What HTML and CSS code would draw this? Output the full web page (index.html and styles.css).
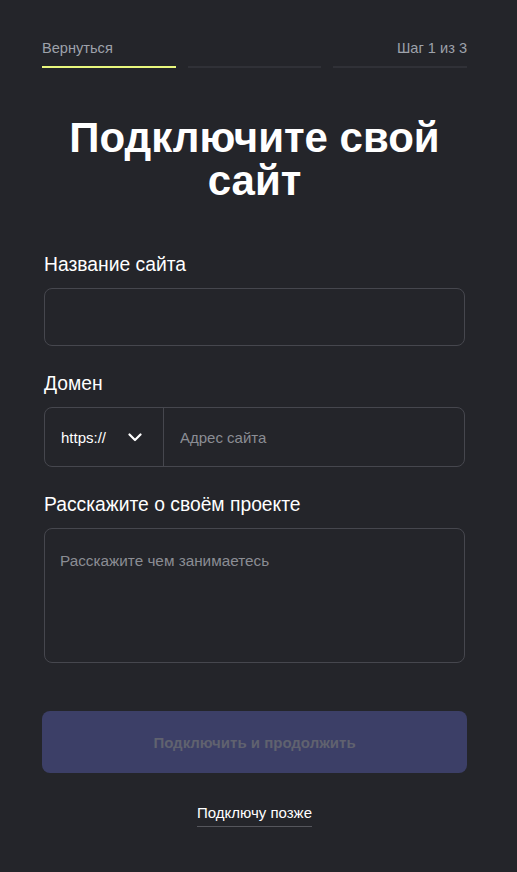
FILE: index.html
```html
<!DOCTYPE html>
<html lang="ru">
<head>
<meta charset="utf-8">
<title>Подключите свой сайт</title>
<link rel="stylesheet" href="styles.css">
</head>
<body>
<div class="page">
  <header class="topbar">
    <div class="topbar-row">
      <a class="back" href="#">Вернуться</a>
      <span class="step">Шаг 1 из 3</span>
    </div>
    <div class="progress">
      <span class="seg seg-active"></span>
      <span class="seg"></span>
      <span class="seg"></span>
    </div>
  </header>

  <h1 class="title">Подключите свой сайт</h1>

  <form class="form">
    <div class="field">
      <label class="label">Название сайта</label>
      <input class="input" type="text">
    </div>
    <div class="field">
      <label class="label">Домен</label>
      <div class="domain">
        <div class="proto">
          <span>https://</span>
          <svg class="chev" width="14" height="9" viewBox="0 0 14 9"><path d="M1.5 1.5 L7 7 L12.5 1.5" fill="none" stroke="#fff" stroke-width="2.2" stroke-linecap="round" stroke-linejoin="round"/></svg>
        </div>
        <input class="domain-input" type="text" placeholder="Адрес сайта">
      </div>
    </div>
    <div class="field">
      <label class="label">Расскажите о своём проекте</label>
      <textarea class="textarea" placeholder="Расскажите чем занимаетесь"></textarea>
    </div>
  </form>

  <button class="submit" type="button">Подключить и продолжить</button>
  <div class="later-wrap"><a class="later" href="#">Подключу позже</a></div>
</div>
</body>
</html>
```

FILE: styles.css
```css
* { box-sizing: border-box; }
html, body {
  margin: 0;
  background: #24252a;
  font-family: "Liberation Sans", Arial, sans-serif;
  color: #fff;
}
.page {
  width: 425px;
  margin-left: 42px;
  padding-top: 38px;
}
.topbar-row {
  display: flex;
  justify-content: space-between;
  font-size: 14.6px;
  line-height: 20px;
}
.back, .step {
  color: #9ea2ab;
  text-decoration: none;
}
.progress {
  display: flex;
  gap: 12px;
  margin-top: 8px;
}
.seg {
  flex: 1;
  height: 2px;
  background: #303137;
}
.seg-active { background: #e9f77d; }

.title {
  margin: 48px 0 0;
  text-align: center;
  font-size: 42px;
  line-height: 43px;
  font-weight: 700;
  color: #fff;
}
.form {
  margin: 51px 2px 0;
  display: flex;
  flex-direction: column;
  gap: 26px;
}
.field {
  display: flex;
  flex-direction: column;
  gap: 11px;
}
.label {
  font-size: 19.3px;
  line-height: 24px;
  color: #fff;
}
.input, .textarea, .domain {
  width: 100%;
  background: transparent;
  border: 1px solid #46474e;
  border-radius: 8px;
  color: #fff;
  font-family: inherit;
  font-size: 15px;
  outline: none;
}
.input { height: 58px; }
.domain {
  height: 60px;
  display: flex;
}
.proto {
  width: 119px;
  display: flex;
  align-items: center;
  justify-content: space-between;
  padding: 0 21px 0 16px;
  border-right: 1px solid #46474e;
  font-size: 15px;
}
.chev { display: block; }
.domain-input {
  flex: 1;
  background: transparent;
  border: 0;
  outline: none;
  padding: 0 16px;
  color: #fff;
  font-family: inherit;
  font-size: 15px;
}
.textarea {
  height: 135px;
  resize: none;
  padding: 22px 15px;
  line-height: 20px;
  display: block;
  font-size: 15.3px;
}
::placeholder { color: #8b8d94; opacity: 1; }

.submit {
  display: block;
  width: 100%;
  height: 62px;
  margin-top: 48px;
  border: 0;
  border-radius: 8px;
  background: #3c3f67;
  color: #60626f;
  font-family: inherit;
  font-size: 15px;
  font-weight: 700;
}
.later-wrap {
  display: flex;
  justify-content: center;
  margin-top: 30px;
}
.later {
  color: #fff;
  text-decoration: none;
  font-size: 15px;
  line-height: 20px;
  padding-bottom: 3px;
  border-bottom: 1px solid #55565c;
}
```
